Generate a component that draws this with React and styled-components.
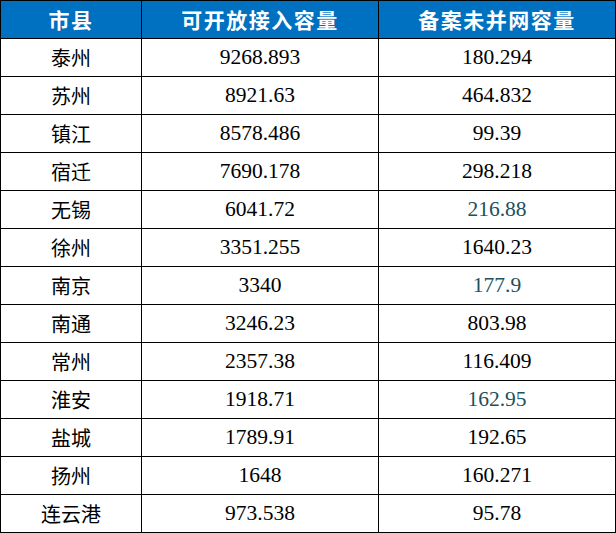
import React from "react";
import styled, { createGlobalStyle } from "styled-components";

const Global = createGlobalStyle`
  html, body { margin: 0; padding: 0; background: #ffffff; }
`;

const Table = styled.table`
  border-collapse: collapse;
  table-layout: fixed;
  width: 615px;
  margin: 0;
`;

const Head = styled.th`
  background: #0070c0;
  color: #ffffff;
  font-family: "Noto Sans CJK SC", "Noto Sans", sans-serif;
  font-weight: 700;
  font-size: 21px;
  letter-spacing: 1.5px;
  height: 37px;
  padding: 0;
  border: 1px solid #000;
  text-align: center;
  line-height: 1;
`;

const Cell = styled.td`
  height: 37px;
  padding: 0;
  border: 1px solid #000;
  text-align: center;
  font-family: ${(p) =>
    p.$cn
      ? `"Noto Sans CJK SC", "Noto Sans", sans-serif`
      : `"Liberation Serif", "Times New Roman", serif`};
  font-size: ${(p) => (p.$cn ? "20px" : "21.5px")};
  color: ${(p) => (p.$tone ? "#22505c" : "#000000")};
  line-height: 1;
`;

const rows = [
  ["泰州", "9268.893", "180.294"],
  ["苏州", "8921.63", "464.832"],
  ["镇江", "8578.486", "99.39"],
  ["宿迁", "7690.178", "298.218"],
  ["无锡", "6041.72", "216.88", true],
  ["徐州", "3351.255", "1640.23"],
  ["南京", "3340", "177.9", true],
  ["南通", "3246.23", "803.98"],
  ["常州", "2357.38", "116.409"],
  ["淮安", "1918.71", "162.95", true],
  ["盐城", "1789.91", "192.65"],
  ["扬州", "1648", "160.271"],
  ["连云港", "973.538", "95.78"],
];

export default function App() {
  return (
    <>
      <Global />
      <Table>
        <colgroup>
          <col style={{ width: 141 }} />
          <col style={{ width: 237 }} />
          <col style={{ width: 237 }} />
        </colgroup>
        <thead>
          <tr>
            <Head>市县</Head>
            <Head>可开放接入容量</Head>
            <Head>备案未并网容量</Head>
          </tr>
        </thead>
        <tbody>
          {rows.map(([city, a, b, tone]) => (
            <tr key={city}>
              <Cell $cn>{city}</Cell>
              <Cell>{a}</Cell>
              <Cell $tone={tone}>{b}</Cell>
            </tr>
          ))}
        </tbody>
      </Table>
    </>
  );
}
